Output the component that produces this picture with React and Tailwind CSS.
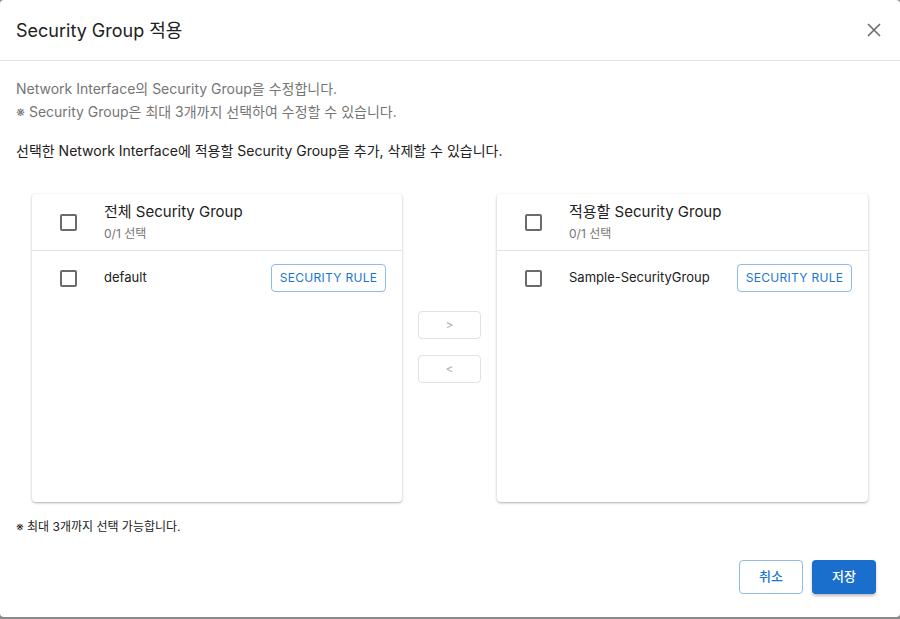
import React from 'react';

const font = { fontFamily: 'Inter, "Noto Sans CJK KR", "Noto Sans", sans-serif' };

function Checkbox() {
  return <span className="block h-[17px] w-[17px] rounded-[2px] border-2 border-[#6b6b6b] bg-white" />;
}

function RuleButton() {
  return (
    <button className="h-[28px] w-[115px] rounded-[4px] border border-[#8fbbe8] bg-white text-[12px] tracking-[0.3px] text-[#1976d2]">
      SECURITY RULE
    </button>
  );
}

function GroupPanel({ title, items }) {
  return (
    <section className="flex h-[308px] flex-col rounded-[4px] bg-white shadow-[0_1px_3px_rgba(0,0,0,0.25),0_1px_1px_rgba(0,0,0,0.08)]">
      <div className="flex h-[57px] items-center border-b border-[#e3e3e3]">
        <div className="flex w-[72px] justify-center">
          <Checkbox />
        </div>
        <div className="flex flex-col">
          <span className="text-[15px] leading-[20px] text-[#212121]">{title}</span>
          <span className="mt-[4px] text-[12px] leading-[16px] text-[#757575]">0/1 선택</span>
        </div>
      </div>
      {items.map((item) => (
        <div key={item} className="flex h-[54px] items-center pr-[16px]">
          <div className="flex w-[72px] justify-center">
            <Checkbox />
          </div>
          <span className="flex-1 text-[13px] text-[#212121]">{item}</span>
          <RuleButton />
        </div>
      ))}
    </section>
  );
}

export default function App() {
  return (
    <div className="h-[619px] w-[900px] bg-[#8a8a8a]" style={font}>
      <div className="flex h-[617px] flex-col rounded-[4px] bg-white">
        <header className="flex h-[61px] shrink-0 items-center justify-between border-b border-[#e0e0e0] pl-[16px] pr-[18px]">
          <h2 className="text-[18px] text-[#212121]">Security Group 적용</h2>
          <svg width="16" height="16" viewBox="0 0 16 16" fill="none" stroke="#6b6b6b" strokeWidth="1.6">
            <path d="M2 2 L14 14 M14 2 L2 14" />
          </svg>
        </header>

        <div className="px-[16px] pt-[16px]">
          <p className="text-[14px] leading-[23px] text-[#757575]">Network Interface의 Security Group을 수정합니다.</p>
          <p className="text-[14px] leading-[23px] text-[#757575]">※ Security Group은 최대 3개까지 선택하여 수정할 수 있습니다.</p>
          <p className="mt-[16px] text-[14px] leading-[23px] text-[#212121]">
            선택한 Network Interface에 적용할 Security Group을 추가, 삭제할 수 있습니다.
          </p>

          <div className="mt-[32px] flex px-[16px]">
            <div className="w-[370px]">
              <GroupPanel title="전체 Security Group" items={['default']} />
            </div>
            <div className="flex flex-1 flex-col items-center justify-center gap-[16px] pb-[3px]">
              <button className="h-[28px] w-[63px] rounded-[4px] border border-[#e2e2e2] bg-white text-[12px] text-[#b0b0b0]">&gt;</button>
              <button className="h-[28px] w-[63px] rounded-[4px] border border-[#e2e2e2] bg-white text-[12px] text-[#b0b0b0]">&lt;</button>
            </div>
            <div className="w-[371px]">
              <GroupPanel title="적용할 Security Group" items={['Sample-SecurityGroup']} />
            </div>
          </div>

          <p className="mt-[17px] text-[12px] leading-[16px] text-[#212121]">※ 최대 3개까지 선택 가능합니다.</p>
        </div>

        <div className="mt-[25px] flex justify-end gap-[9px] pr-[24px]">
          <button className="h-[34px] w-[64px] rounded-[4px] border border-[#8fbbe8] bg-white text-[13px] font-medium text-[#1976d2]">취소</button>
          <button className="h-[34px] w-[64px] rounded-[4px] bg-[#1a6fcc] text-[13px] font-medium text-white shadow-[0_2px_3px_rgba(0,0,0,0.25)]">저장</button>
        </div>
      </div>
    </div>
  );
}
